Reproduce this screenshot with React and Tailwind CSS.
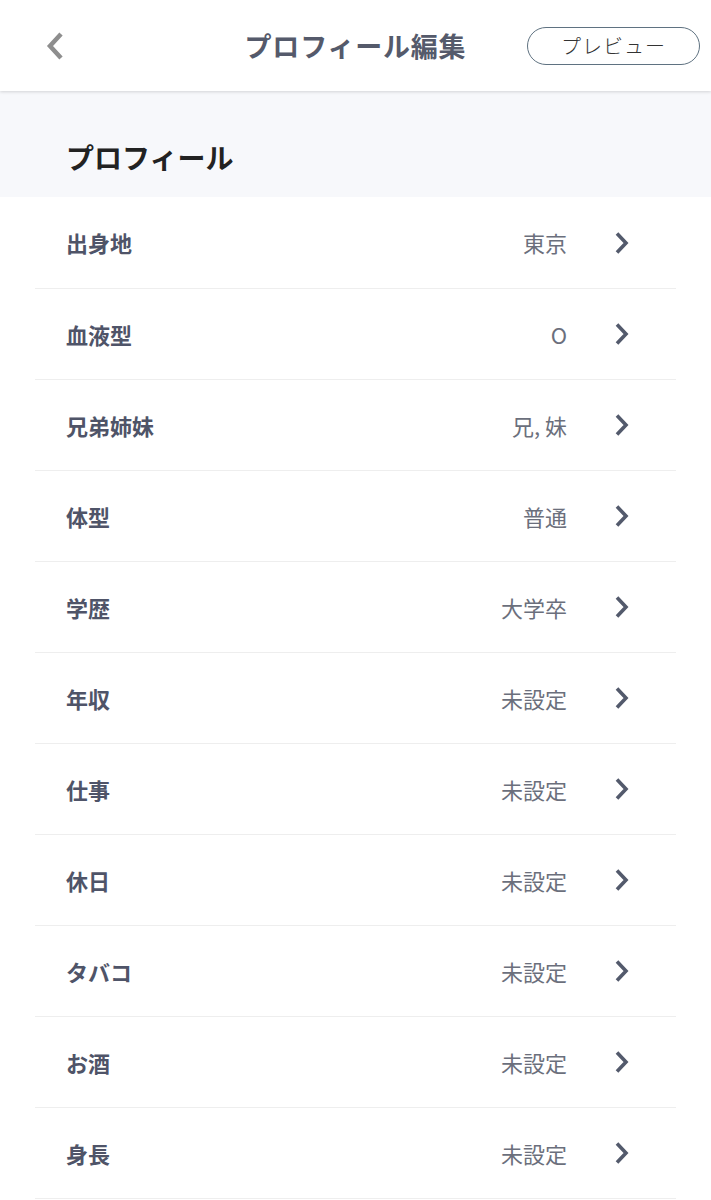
const items = [
    { label: '出身地', value: '東京' },
    { label: '血液型', value: 'O' },
    { label: '兄弟姉妹', value: '兄, 妹' },
    { label: '体型', value: '普通' },
    { label: '学歴', value: '大学卒' },
    { label: '年収', value: '未設定' },
    { label: '仕事', value: '未設定' },
    { label: '休日', value: '未設定' },
    { label: 'タバコ', value: '未設定' },
    { label: 'お酒', value: '未設定' },
    { label: '身長', value: '未設定' },
];

const App = () => {
    return (
        <div
            className="min-h-screen bg-white"
            style={{ fontFamily: '"Noto Sans CJK JP", "Noto Sans", sans-serif' }}
        >
            {/* Header */}
            <header className="relative z-10 flex items-center h-[91px] bg-white shadow-[0_1px_3px_rgba(0,0,0,0.15)]">
                <button className="absolute left-[44px] top-[31px]">
                    <svg width="22" height="30" viewBox="0 0 22 30" fill="none">
                        <polyline points="17,3 6,15 17,27" stroke="#8e8e8e" strokeWidth="4.5" strokeLinejoin="miter" />
                    </svg>
                </button>
                <h1 className="w-full text-center text-[27px] font-bold text-[#555a6b] tracking-[0.8px] leading-none">
                    プロフィール編集
                </h1>
                <button className="absolute right-[11px] top-[27px] w-[173px] h-[38px] rounded-full border-[1.5px] border-[#5f7281] text-[20px] text-[#333] font-light leading-none tracking-[1px]">
                    プレビュー
                </button>
            </header>

            {/* Section title */}
            <div className="h-[106px] bg-[#f7f8fb] flex items-end pl-[66px] pb-[26px]">
                <h2 className="text-[28px] font-bold text-[#222] leading-none">プロフィール</h2>
            </div>

            {/* List */}
            <ul className="px-[35px]">
                {items.map((item, i) => (
                    <li
                        key={item.label}
                        className={`flex items-center border-b border-[#eeeeee] pl-[31px] pr-[46px] ${i === 0 ? 'h-[92px]' : 'h-[91px]'}`}
                    >
                        <span className="flex-1 text-[22px] font-bold text-[#4f5468]">{item.label}</span>
                        <span className="text-[22px] text-[#6b6f7c]">{item.value}</span>
                        <svg className="ml-[47px]" width="16" height="24" viewBox="0 0 16 24" fill="none">
                            <polyline points="3,2.5 12,12 3,21.5" stroke="#535a6c" strokeWidth="3.6" />
                        </svg>
                    </li>
                ))}
            </ul>
        </div>
    );
};

export default App;
